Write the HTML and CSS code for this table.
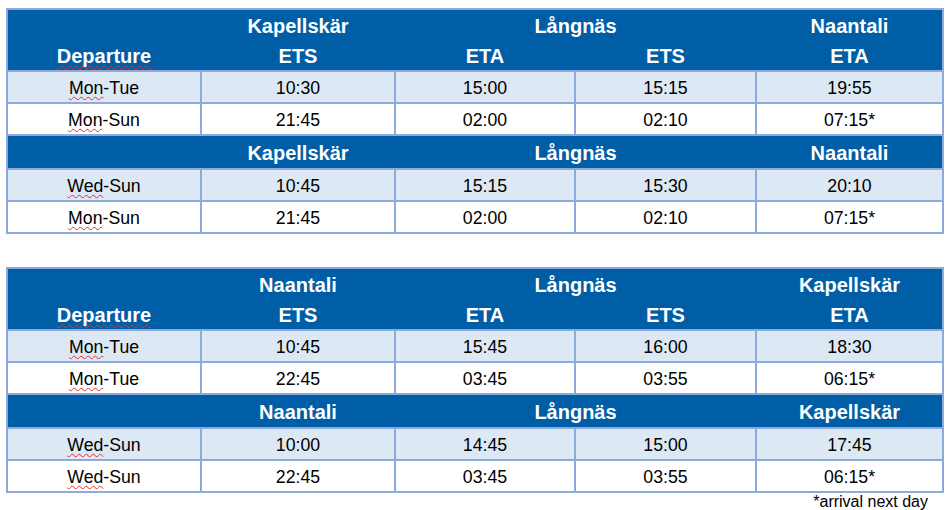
FILE: index.html
```html
<!DOCTYPE html>
<html>
<head>
<meta charset="utf-8">
<link rel="stylesheet" href="styles.css">
</head>
<body>
<div class="page">
  <div class="tt">
    <div class="hdr two">
      <div></div>
      <div>Kapellskär</div>
      <div class="span2">Långnäs</div>
      <div>Naantali</div>
      <div><span class="sp">Departure</span></div>
      <div>ETS</div>
      <div>ETA</div>
      <div>ETS</div>
      <div>ETA</div>
    </div>
    <div class="row alt"><div><span class="sp">Mon</span>-Tue</div><div>10:30</div><div>15:00</div><div>15:15</div><div>19:55</div></div>
    <div class="row"><div><span class="sp">Mon</span>-Sun</div><div>21:45</div><div>02:00</div><div>02:10</div><div>07:15*</div></div>
    <div class="hdr one">
      <div></div>
      <div>Kapellskär</div>
      <div class="span2">Långnäs</div>
      <div>Naantali</div>
    </div>
    <div class="row alt"><div><span class="sp">Wed</span>-Sun</div><div>10:45</div><div>15:15</div><div>15:30</div><div>20:10</div></div>
    <div class="row"><div><span class="sp">Mon</span>-Sun</div><div>21:45</div><div>02:00</div><div>02:10</div><div>07:15*</div></div>
  </div>

  <div class="tt second">
    <div class="hdr two">
      <div></div>
      <div>Naantali</div>
      <div class="span2">Långnäs</div>
      <div>Kapellskär</div>
      <div><span class="sp">Departure</span></div>
      <div>ETS</div>
      <div>ETA</div>
      <div>ETS</div>
      <div>ETA</div>
    </div>
    <div class="row alt"><div><span class="sp">Mon</span>-Tue</div><div>10:45</div><div>15:45</div><div>16:00</div><div>18:30</div></div>
    <div class="row"><div><span class="sp">Mon</span>-Tue</div><div>22:45</div><div>03:45</div><div>03:55</div><div>06:15*</div></div>
    <div class="hdr one">
      <div></div>
      <div>Naantali</div>
      <div class="span2">Långnäs</div>
      <div>Kapellskär</div>
    </div>
    <div class="row alt"><div><span class="sp">Wed</span>-Sun</div><div>10:00</div><div>14:45</div><div>15:00</div><div>17:45</div></div>
    <div class="row"><div><span class="sp">Wed</span>-Sun</div><div>22:45</div><div>03:45</div><div>03:55</div><div>06:15*</div></div>
  </div>
  <div class="note">*arrival next day</div>
</div>
</body>
</html>
```

FILE: styles.css
```css
html, body {
  margin: 0;
  padding: 0;
  background: #ffffff;
}

body {
  font-family: "Liberation Sans", Arial, sans-serif;
  color: #000000;
}

.page {
  padding: 8px 0 0 6px;
  width: 938px;
}

.tt {
  display: grid;
  row-gap: 2px;
  padding: 2px;
  background: #8eaadb;
  width: 934px;
}

.tt.second {
  margin-top: 33px;
}

.hdr,
.row {
  display: grid;
  grid-template-columns: 192px 192px 178px 179px 185px;
  column-gap: 2px;
}

.hdr {
  background: #005ea6;
  color: #ffffff;
  font-weight: bold;
  font-size: 20px;
}

.hdr.two {
  grid-template-rows: 30px 30px;
}

.hdr.one {
  grid-template-rows: 32px;
}

.hdr > div,
.row > div {
  display: flex;
  align-items: center;
  justify-content: center;
  white-space: nowrap;
}

.hdr.two > div {
  padding-top: 3px;
}

.hdr.one > div {
  padding-top: 2px;
}

.span2 {
  grid-column: span 2;
}

.row {
  font-size: 17.7px;
  grid-template-rows: 30px;
}

.row > div {
  background: #ffffff;
  padding-top: 2px;
}

.row.alt > div {
  background: #dde8f5;
}

.sp {
  text-decoration: underline wavy #e0302c;
  text-decoration-thickness: 1px;
  text-underline-offset: 2px;
  text-decoration-skip-ink: none;
}

.note {
  width: 922px;
  padding-right: 16px;
  text-align: right;
  font-size: 16px;
  line-height: 18px;
}
```
